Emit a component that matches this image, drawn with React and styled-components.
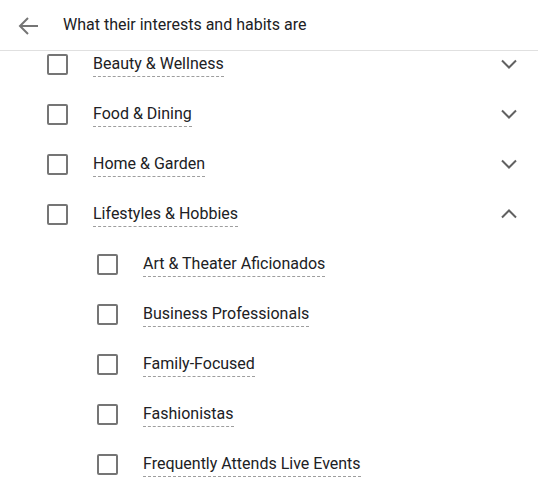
import React from "react";
import styled, { createGlobalStyle } from "styled-components";

const Global = createGlobalStyle`
  html, body { margin: 0; padding: 0; background: #fff; }
  body { font-family: Roboto, "Noto Sans", Arial, sans-serif; color: #202124; }
`;

const Page = styled.div`
  width: 538px;
  height: 479px;
  display: flex;
  flex-direction: column;
  overflow: hidden;
  background: #fff;
`;

const Header = styled.header`
  height: 51px;
  flex: none;
  display: flex;
  align-items: center;
  border-bottom: 1px solid #e0e0e0;
  box-sizing: border-box;
  padding-left: 15px;
  gap: 22px;
  position: relative;
  z-index: 1;
  background: #fff;
`;

const BackButton = styled.button`
  width: 26px;
  height: 26px;
  padding: 0;
  border: 0;
  background: none;
  display: flex;
  align-items: center;
  justify-content: center;
  color: #757575;
  margin-top: 2px;
`;

const Title = styled.h1`
  margin: 0;
  font-size: 16px;
  font-weight: 400;
  color: #202124;
  line-height: 20px;
`;

const Viewport = styled.div`
  flex: 1;
  overflow: hidden;
`;

const List = styled.ul`
  list-style: none;
  margin: -12px 0 0;
  padding: 0;
`;

const Row = styled.li`
  height: 50px;
  display: flex;
  align-items: center;
  padding-left: ${(p) => (p.$nested ? 97 : 47)}px;
  padding-right: 15px;
`;

const Box = styled.span`
  width: 21px;
  height: 21px;
  box-sizing: border-box;
  border: 2px solid #757575;
  border-radius: 2px;
  flex: none;
  margin-right: 25px;
`;

const Label = styled.span`
  font-size: 16px;
  line-height: 20px;
  color: #202124;
  border-bottom: 1px dashed #9e9e9e;
  padding-bottom: 2px;
  margin-top: 3px;
`;

const Toggle = styled.span`
  margin-left: auto;
  width: 28px;
  height: 28px;
  display: flex;
  align-items: center;
  justify-content: center;
  color: #616161;
`;

const Chevron = ({ up }) => (
  <svg width="16" height="10" viewBox="0 0 16 10">
    <polyline
      points={up ? "1,8.5 8,1.5 15,8.5" : "1,1.5 8,8.5 15,1.5"}
      fill="none"
      stroke="currentColor"
      strokeWidth="2"
    />
  </svg>
);

const items = [
  { label: "Beauty & Wellness", toggle: "down" },
  { label: "Food & Dining", toggle: "down" },
  { label: "Home & Garden", toggle: "down" },
  { label: "Lifestyles & Hobbies", toggle: "up" },
  { label: "Art & Theater Aficionados", nested: true },
  { label: "Business Professionals", nested: true },
  { label: "Family-Focused", nested: true },
  { label: "Fashionistas", nested: true },
  { label: "Frequently Attends Live Events", nested: true },
];

export default function App() {
  return (
    <Page>
      <Global />
      <Header>
        <BackButton aria-label="Back">
          <svg width="22" height="20" viewBox="0 0 22 20">
            <path
              d="M21 10H3M11 2L3 10l8 8"
              fill="none"
              stroke="currentColor"
              strokeWidth="2"
            />
          </svg>
        </BackButton>
        <Title>What their interests and habits are</Title>
      </Header>
      <Viewport>
        <List>
          {items.map((it) => (
            <Row key={it.label} $nested={it.nested}>
              <Box />
              <Label>{it.label}</Label>
              {it.toggle && (
                <Toggle>
                  <Chevron up={it.toggle === "up"} />
                </Toggle>
              )}
            </Row>
          ))}
        </List>
      </Viewport>
    </Page>
  );
}
